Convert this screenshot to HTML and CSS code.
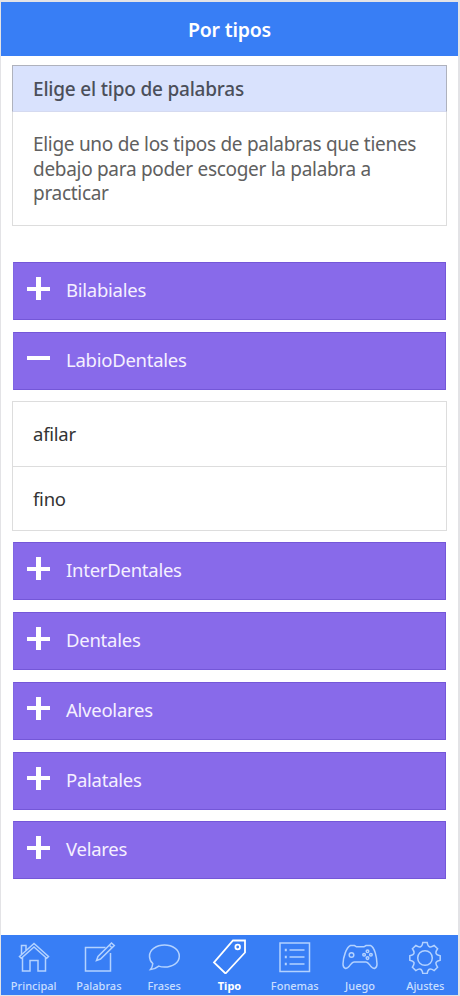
FILE: index.html
```html
<!DOCTYPE html>
<html lang="es">
<head>
<meta charset="utf-8">
<title>Por tipos</title>
<link rel="stylesheet" href="styles.css">
</head>
<body>
<div class="app">
  <header class="bar"><h1>Por tipos</h1></header>
  <main>
    <section class="card">
      <h2>Elige el tipo de palabras</h2>
      <p>Elige uno de los tipos de palabras que tienes<br>debajo para poder escoger la palabra a<br>practicar</p>
    </section>
    <div class="groups">
      <button class="group"><span class="sign plus"></span><span>Bilabiales</span></button>
      <button class="group"><span class="sign"></span><span>LabioDentales</span></button>
      <ul class="words"><li>afilar</li><li>fino</li></ul>
      <button class="group"><span class="sign plus"></span><span>InterDentales</span></button>
      <button class="group"><span class="sign plus"></span><span>Dentales</span></button>
      <button class="group"><span class="sign plus"></span><span>Alveolares</span></button>
      <button class="group"><span class="sign plus"></span><span>Palatales</span></button>
      <button class="group"><span class="sign plus"></span><span>Velares</span></button>
    </div>
  </main>
  <nav class="tabs">
    <a class="tab"><svg viewBox="0 0 36 36"><path d="M3.500 18.500 18 5.500l14.500 13-1.800 1.800L18 9 5.300 20.300zM5.500 16.500V7.500h4.500v5M6.500 19.500v13.500h7.500V22.500h8v10.500h7.500V19.500"/></svg><span>Principal</span></a>
    <a class="tab"><svg viewBox="0 0 36 36"><path d="M24.500 9.500H4.500v23.500h25V15"/><path d="M15.500 22.500 17 18.500 30.500 5l2.800 2.500L19.500 21zM28.300 7.300l2.700 2.500"/></svg><span>Palabras</span></a>
    <a class="tab"><svg viewBox="0 0 36 36"><path d="M18.500 7c8 0 14.800 4.700 14.800 11.200S26.500 29 18.500 29c-2 0-4-.3-5.700-.9-2 1.700-4.800 2.900-8.300 3.400 1.400-1.700 2.100-3.600 2.300-6C4.600 23.500 3.500 21 3.500 18.200 3.500 11.700 10.500 7 18.500 7z"/></svg><span>Frases</span></a>
    <a class="tab active"><svg viewBox="0 0 36 36"><path d="M22 2.500H34V14.500L14.500 35.500 3 24.500z"/><circle cx="26.700" cy="9" r="2.300"/></svg><span>Tipo</span></a>
    <a class="tab"><svg viewBox="0 0 36 36"><path d="M3 5h29.500v28.500H3zM12.500 12h15M12.500 19h15M12.500 26h15"/><path class="dots" d="M7.800 12h2M7.800 19h2M7.800 26h2"/></svg><span>Fonemas</span></a>
    <a class="tab"><svg viewBox="0 0 36 36"><path d="M8.500 7.500h4l2 1.300h7.500l2-1.300h4.500c4 1.500 6.500 12 6.500 18.500 0 5-3.500 5.500-6 2.500-2-2.400-3-4.500-5-4.500H12c-2 0-3 2.100-5 4.500-2.500 3-6 2.500-6-2.500C1 19.500 4.500 9 8.500 7.500z"/><circle cx="9.500" cy="17" r="2.300"/><circle cx="25.500" cy="13.300" r="1.300"/><circle cx="25.500" cy="20.100" r="1.300"/><circle cx="22.100" cy="16.700" r="1.300"/><circle cx="28.900" cy="16.700" r="1.300"/></svg><span>Juego</span></a>
    <a class="tab"><svg viewBox="0 0 36 36"><path d="M15.800 4.500h4.400q.5 3.500 2.200 4.200t4.800-1.300l3.400 3.400q-2.200 3-1.500 4.800t4.100 2.200v4.400q-3.400.5-4.100 2.200t1.500 4.800l-3.400 3.400q-3.100-2-4.800-1.300t-2.200 4.200h-4.400q-.5-3.500-2.200-4.200t-4.800 1.300l-3.400-3.400q2.200-3.100 1.500-4.800T2.800 22.200v-4.400q3.400-.4 4.100-2.200t-1.500-4.800l3.400-3.400q3.100 2 4.800 1.300t2.200-4.200z"/><circle cx="18" cy="20" r="7.300"/></svg><span>Ajustes</span></a>
  </nav>
</div>
</body>
</html>
```
FILE: styles.css
```css
* { box-sizing: border-box; }
body {
  margin: 0;
  background: #fff;
  font-family: "Noto Sans", sans-serif;
}
.app {
  height: 996px;
  display: flex;
  flex-direction: column;
  border: solid #e3e3e6;
  border-width: 2px 2px 1px 1px;
}
.bar {
  height: 54px;
  background: #387ef5;
  color: #fff;
  text-align: center;
}
h1 {
  margin: 0;
  font-size: 19.5px;
  line-height: 56px;
  font-weight: 600;
  letter-spacing: -.2px;
}
main { flex: 1; padding: 9px 11px 0; }
.card { height: 161px; border: 1px solid #ddd; }
h2 {
  margin: -1px -1px 0;
  height: 47px;
  padding-left: 20px;
  border: 1px solid #afb2bd;
  border-bottom-color: #d5daf0;
  background: #d9e2fd;
  color: #4b4f5a;
  font-size: 19px;
  font-weight: 500;
  line-height: 47px;
  letter-spacing: -.2px;
}
p {
  margin: 0;
  padding: 20px 0 0 20px;
  color: #606060;
  font-size: 19px;
  line-height: 24.5px;
  letter-spacing: -.3px;
  white-space: nowrap;
}
.groups {
  display: flex;
  flex-direction: column;
  gap: 11.7px;
  padding-top: 36px;
}
.group {
  height: 58px;
  margin: 0 1px;
  padding: 0 0 3px 14px;
  display: flex;
  align-items: center;
  gap: 16px;
  border: 1px solid #7457d8;
  border-left-color: #8066e2;
  background: #886aea;
  color: #f5f0ff;
  font: 18.5px "Noto Sans", sans-serif;
  letter-spacing: -.25px;
}
.sign {
  width: 23px;
  height: 23px;
  margin: -2px 0 0 -1px;
  background: linear-gradient(#fff, #fff) center / 100% 4px no-repeat;
}
.plus {
  background: linear-gradient(#fff, #fff) center / 100% 4px no-repeat, linear-gradient(#fff, #fff) center / 5px 100% no-repeat;
}
.words {
  list-style: none;
  margin: 0 0 -.6px;
  padding: 0;
  border: 1px solid #ddd;
}
.words li {
  height: 64px;
  padding-left: 20px;
  color: #333;
  font-size: 18.5px;
  line-height: 64px;
  letter-spacing: -.25px;
}
.words li + li { border-top: 1px solid #ddd; }
.tabs {
  height: 60px;
  display: flex;
  background: #387ef5;
}
.tab {
  flex: 1;
  display: flex;
  flex-direction: column;
  align-items: center;
  color: #c8deff;
  font-size: 11px;
  font-weight: 500;
  line-height: 14px;
}
.tab svg {
  width: 36px;
  height: 36px;
  margin: 2.500px 0 5.500px;
  fill: none;
  stroke: #b3d2ff;
  stroke-width: 1.5;
}
.tab .dots { stroke-width: 2.5; }
.tab.active { color: #fff; font-weight: 700; }
.active svg { stroke: #fff; stroke-width: 1.8; }
```
